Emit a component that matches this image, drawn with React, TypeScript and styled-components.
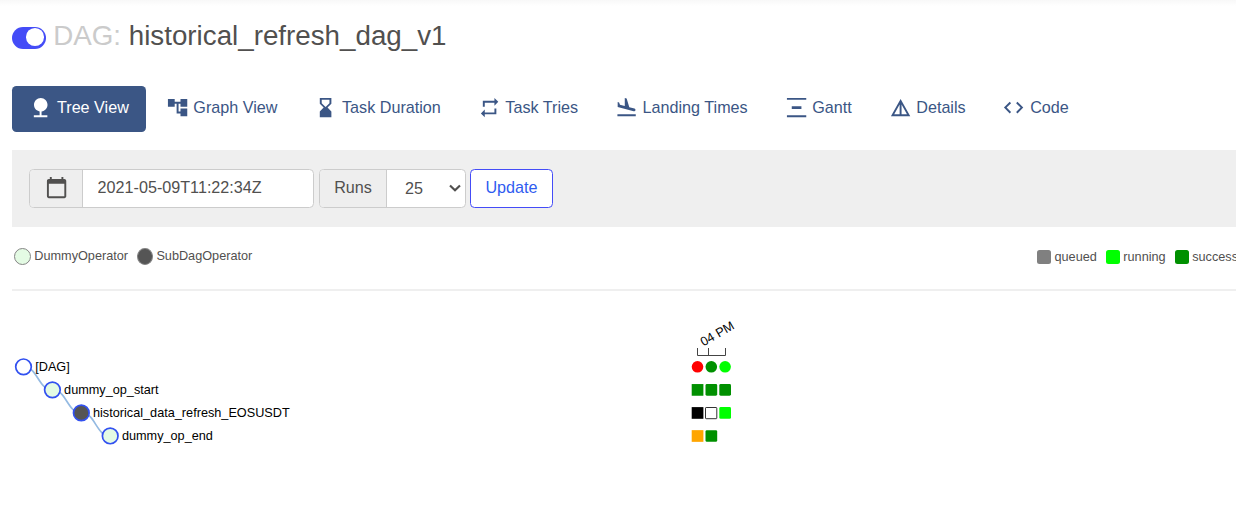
import React from "react";
import styled, { createGlobalStyle } from "styled-components";

const GlobalStyle = createGlobalStyle`
  * { box-sizing: border-box; }
  html, body { margin: 0; padding: 0; background: #fff; overflow: hidden; }
  body { font-family: "Liberation Sans", Arial, sans-serif; font-size: 16.17px; color: #51504f; }
`;

const Page = styled.main`
  width: 100%;
  height: 513px;
  overflow: hidden;
  padding-left: 12px;
  background: linear-gradient(#f8f8f8, #fff 6px);
`;

const Header = styled.header`
  display: flex;
  align-items: center;
  height: 74px;
  padding-bottom: 2px;
`;

const Toggle = styled.button`
  width: 34px;
  height: 22px;
  margin: 3px 7.2px 0 0;
  padding: 1.6px 1.6px;
  border: 0;
  border-radius: 11px;
  background: #444cf7;
  display: flex;
  justify-content: flex-end;
`;

const Knob = styled.span`
  width: 18.6px;
  height: 18px;
  border-radius: 50%;
  background: #fff;
`;

const Title = styled.h3`
  margin: 0;
  font-size: 27.75px;
  line-height: 32px;
  font-weight: 400;
  white-space: pre;
`;

const Muted = styled.span`
  color: #cbcbcb;
`;

const Nav = styled.nav`
  display: flex;
  gap: 2.25px;
  margin-top: 12px;
  height: 46px;
`;

const Tab = styled.a<{ $active?: boolean }>`
  display: flex;
  align-items: center;
  gap: 4.5px;
  padding: 0 17.3px 3px;
  border-radius: 4.5px;
  white-space: nowrap;
  color: ${(p) => (p.$active ? "#fff" : "#3b5685")};
  background: ${(p) => (p.$active ? "#3b5685" : "transparent")};
`;

const Icon = styled.svg`
  width: 23.2px;
  height: 23.2px;
  flex: none;
  fill: currentColor;
`;

const FormBar = styled.form`
  display: flex;
  align-items: flex-start;
  margin-top: 18px;
  height: 77px;
  padding: 19px 17px;
  background: #efefef;
`;

const Group = styled.div<{ $width: number; $gap: number }>`
  display: flex;
  width: ${(p) => p.$width}px;
  height: 39px;
  margin-right: ${(p) => p.$gap}px;
  border: 1px solid #ccc;
  border-radius: 4.5px;
  background: #fff;
  overflow: hidden;
`;

const Addon = styled.span<{ $width: number; $shift?: number }>`
  display: flex;
  align-items: center;
  justify-content: center;
  width: ${(p) => p.$width}px;
  padding: 0 0 ${(p) => (p.$shift ? 1 : 2)}px ${(p) => p.$shift ?? 0}px;
  border-right: 1px solid #ccc;
  background: #eee;
`;

const DateInput = styled.input`
  flex: 1;
  min-width: 0;
  border: 0;
  padding: 0 14.6px 2px;
  font: inherit;
  color: inherit;
  background: transparent;
  outline: 0;
`;

const SelectBox = styled.div`
  flex: 1;
  display: flex;
  align-items: center;
  justify-content: space-between;
  padding: 0 4px 0 18px;
`;

const Chevron = styled.svg`
  width: 12px;
  height: 8px;
  margin-bottom: 1px;
  fill: none;
  stroke: #51504f;
  stroke-width: 2.2;
`;

const UpdateButton = styled.button`
  width: 83px;
  height: 39px;
  padding: 0 0 2px;
  border: 1px solid #444cf7;
  border-radius: 4.5px;
  background: #fff;
  color: #2f5cf0;
  font: inherit;
`;

const LegendBar = styled.section`
  display: flex;
  justify-content: space-between;
  height: 64px;
  padding-top: 20px;
  border-bottom: 2px solid #efefef;
  font-size: 12.7px;
  line-height: 18px;
`;

const Operators = styled.div`
  display: flex;
  padding-left: 2px;
  gap: 9px;
`;

const OperatorItem = styled.span`
  display: flex;
  gap: 3.3px;
`;

const Dot = styled.i<{ $fill: string; $size: number }>`
  width: ${(p) => p.$size}px;
  height: 17px;
  margin-top: 1px;
  border: 1px solid #858585;
  border-radius: 50%;
  background: ${(p) => p.$fill};
`;

const States = styled.div`
  display: flex;
  width: 199px;
  padding-top: 1px;
  gap: 9px;
  overflow: hidden;
  white-space: nowrap;
`;

const StateItem = styled.span`
  display: flex;
  flex: none;
  gap: 3.5px;
`;

const Swatch = styled.i<{ $fill: string }>`
  width: 14px;
  height: 14px;
  margin-top: 2px;
  border-radius: 2.5px;
  background: ${(p) => p.$fill};
`;

const TreeChart = styled.svg`
  display: block;
  width: 1224px;
  height: 222px;
  font-size: 12.7px;
`;

const tabs = [
  { label: "Tree View", d: "M13 16.12c3.47-.41 6.17-3.36 6.17-6.95 0-3.87-3.13-7-7-7s-7 3.13-7 7c0 3.47 2.52 6.34 5.83 6.89V20H5v2h14v-2h-6v-3.88z" },
  { label: "Graph View", d: "M22 11V3h-7v3H9V3H2v8h7V8h2v10h4v3h7v-8h-7v3h-2V8h2v3z" },
  { label: "Task Duration", d: "M18 22l-.01-6L14 12l3.99-4.01L18 2H6v6l4 4-4 3.99V22h12zM8 7.5V4h8v3.5l-4 4-4-4z" },
  { label: "Task Tries", d: "M7 7h10v3l4-4-4-4v3H5v6h2V7zm10 10H7v-3l-4 4 4 4v-3h12v-6h-2v4z" },
  { label: "Landing Times", d: "M2.5 19h19v2h-19v-2zm16.84-3.15c.8.21 1.62-.26 1.84-1.06.21-.8-.26-1.62-1.06-1.84l-5.31-1.42-2.76-9.02L10.12 2v8.28L5.15 8.95l-.93-2.32-1.45-.39v5.17l16.57 4.44z" },
  { label: "Gantt", d: "M22 2v2H2V2h20zM7 10.5v3h10v-3H7zM2 20v2h20v-2H2z" },
  { label: "Details", d: "M12 3L2 21h20L12 3zm1 5.92L18.6 19H13V8.92zm-2 0V19H5.4L11 8.92z" },
  { label: "Code", d: "M9.4 16.6L4.8 12l4.6-4.6L8 6l-6 6 6 6 1.4-1.4zm5.2 0l4.6-4.6-4.6-4.6L16 6l6 6-6 6-1.4-1.4z" },
];

const calendarPath =
  "M20 3h-1V1h-2v2H7V1H5v2H4c-1.1 0-2 .9-2 2v16c0 1.1.9 2 2 2h16c1.1 0 2-.9 2-2V5c0-1.1-.9-2-2-2zm0 18H4V8h16v13z";

const GREEN = "#009000";
const LIME = "#00ff00";

const rows = [
  { label: "[DAG]", fill: "#fff", runs: ["#ff0000", GREEN, LIME] },
  { label: "dummy_op_start", fill: "#e4fbe4", runs: [GREEN, GREEN, GREEN] },
  { label: "historical_data_refresh_EOSUSDT", fill: "#555", runs: ["#000", "#fff", LIME] },
  { label: "dummy_op_end", fill: "#e4fbe4", runs: ["#ffa500", GREEN] },
];

const states = [
  { label: "queued", fill: "#808080" },
  { label: "running", fill: LIME },
  { label: "success", fill: GREEN },
];

const nodeX = (i: number) => 11.5 + i * 28.9;
const nodeY = (i: number) => 75.8 + i * 23.05;
const runX = (i: number) => 685.5 + i * 13.8;

function Tree() {
  return (
    <TreeChart viewBox="0 0 1224 222">
      <path d="M685.5 57V64.5H713.5V57M696.5 57V64.5" fill="none" stroke="#444" />
      <text transform="translate(691.5 55.5) rotate(-30)">04 PM</text>
      {rows.slice(1).map((row, i) => {
        const x = nodeX(i);
        const y = nodeY(i);
        return (
          <path
            key={row.label}
            d={`M${x} ${y}C${x + 14.4} ${y} ${x + 14.4} ${y + 23} ${x + 28.9} ${y + 23}`}
            fill="none"
            stroke="#94bae2"
            strokeWidth="1.7"
          />
        );
      })}
      {rows.map((row, i) => (
        <g key={row.label}>
          <circle cx={nodeX(i)} cy={nodeY(i)} r="7.8" fill={row.fill} stroke="#3251f0" strokeWidth="1.7" />
          <text x={nodeX(i) + 11.7} y={nodeY(i) + 4.2}>{row.label}</text>
          {row.runs.map((fill, j) =>
            i === 0 ? (
              <circle key={j} cx={runX(j)} cy={nodeY(i)} r="5.8" fill={fill} />
            ) : (
              <rect
                key={j}
                x={runX(j) - 5.8}
                y={nodeY(i) - (fill === "#fff" ? 5.4 : 5.8)}
                width={fill === "#fff" ? 11.3 : 11.7}
                height={fill === "#fff" ? 11.2 : 11.7}
                rx={j === 0 ? 0 : fill === "#fff" ? 0.6 : 1.4}
                fill={fill}
                stroke={fill === "#fff" ? "#333" : "none"}
              />
            )
          )}
        </g>
      ))}
    </TreeChart>
  );
}

export default function App() {
  return (
    <Page>
      <GlobalStyle />
      <Header>
        <Toggle type="button" aria-label="Toggle DAG"><Knob /></Toggle>
        <Title><Muted>DAG:</Muted> historical_refresh_dag_v1</Title>
      </Header>
      <Nav>
        {tabs.map((tab, i) => (
          <Tab key={tab.label} $active={i === 0}>
            <Icon viewBox="0 0 24 24"><path d={tab.d} /></Icon>
            {tab.label}
          </Tab>
        ))}
      </Nav>
      <FormBar>
        <Group $width={285} $gap={5}>
          <Addon $width={53} $shift={1.6}><Icon viewBox="0 0 24 24"><path d={calendarPath} /></Icon></Addon>
          <DateInput defaultValue="2021-05-09T11:22:34Z" />
        </Group>
        <Group $width={147} $gap={4}>
          <Addon $width={67}>Runs</Addon>
          <SelectBox>
            25
            <Chevron viewBox="0 0 12 8"><path d="M1 1.5L6 6.2L11 1.5" /></Chevron>
          </SelectBox>
        </Group>
        <UpdateButton type="button">Update</UpdateButton>
      </FormBar>
      <LegendBar>
        <Operators>
          <OperatorItem><Dot $fill="#e4fbe4" $size={17} />DummyOperator</OperatorItem>
          <OperatorItem><Dot $fill="#555" $size={16} />SubDagOperator</OperatorItem>
        </Operators>
        <States>
          {states.map((s) => (
            <StateItem key={s.label}><Swatch $fill={s.fill} />{s.label}</StateItem>
          ))}
        </States>
      </LegendBar>
      <Tree />
    </Page>
  );
}
